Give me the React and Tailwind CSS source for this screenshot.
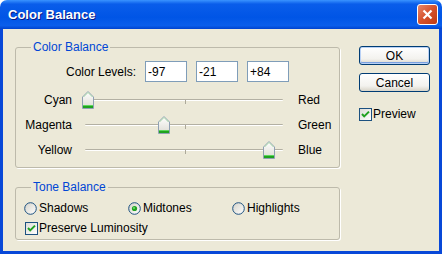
import React from 'react';

const Thumb = () => (
  <svg width="12" height="18" viewBox="0 0 12 18">
    <defs>
      <linearGradient id="thumbFill" x1="0" y1="0" x2="0" y2="1">
        <stop offset="0" stopColor="#FFFFFF" />
        <stop offset="1" stopColor="#DCDBD3" />
      </linearGradient>
    </defs>
    <path d="M0.5 6 L6 0.5 L11.5 6 V17.5 H0.5 Z" fill="url(#thumbFill)" stroke="#8FA0B3" />
    <path d="M1.5 6 L6 1.5 L10.5 6" fill="none" stroke="#A6D8A6" />
    <rect x="1" y="14" width="10" height="3" fill="#1FA31F" />
    <rect x="1" y="14" width="10" height="1" fill="#5CD65C" />
  </svg>
);

const Check = () => (
  <svg width="13" height="13" viewBox="0 0 13 13">
    <defs>
      <linearGradient id="boxFill" x1="0" y1="0" x2="1" y2="1">
        <stop offset="0" stopColor="#DCDCD7" />
        <stop offset="1" stopColor="#FFFFFF" />
      </linearGradient>
    </defs>
    <rect x="0.5" y="0.5" width="12" height="12" fill="url(#boxFill)" stroke="#1C5180" />
    <path d="M3 6 L5.2 8.4 L10 3.6" fill="none" stroke="#21A121" strokeWidth="2" />
  </svg>
);

const Radio = ({ on }) => (
  <svg width="13" height="13" viewBox="0 0 13 13">
    <defs>
      <linearGradient id="radioFill" x1="0" y1="0" x2="1" y2="1">
        <stop offset="0" stopColor="#D4D2C8" />
        <stop offset="1" stopColor="#FFFFFF" />
      </linearGradient>
    </defs>
    <circle cx="6.5" cy="6.5" r="5.8" fill="url(#radioFill)" stroke="#1C5180" />
    {on && <circle cx="6.5" cy="6.5" r="2.6" fill="#21A121" />}
    {on && <circle cx="6" cy="6" r="1" fill="#6FE06F" />}
  </svg>
);

function Slider({ left, right, value }) {
  const pos = ((value + 100) / 200) * 200;
  return (
    <div className="flex h-[25px] items-center">
      <span className="w-[56px] text-right">{left}</span>
      <div className="relative ml-[13px] h-[25px] w-[200px]">
        <div className="absolute left-0 top-[12px] h-[2px] w-[198px] rounded-full border-t border-[#B3B0A3] bg-white" />
        <div className="absolute left-[100px] top-[13px] h-[4px] w-px bg-[#ACA899]" />
        <div className="absolute top-[4px] leading-none" style={{ left: pos - 6 }}>
          <Thumb />
        </div>
      </div>
      <span className="ml-[13px]">{right}</span>
    </div>
  );
}

function Button({ children, main }) {
  return (
    <button
      className={
        'h-[19px] w-[71px] rounded-[3px] border border-[#003C74] bg-[linear-gradient(180deg,#FFFFFF_0%,#F3F2EE_70%,#D8D4C8_100%)] text-[12px] leading-none text-black ' +
        (main ? 'shadow-[inset_0_0_0_1px_#B9D1F5,inset_0_-1px_0_1px_#7AA0E0]' : '')
      }
    >
      {children}
    </button>
  );
}

export default function App() {
  const levels = ['-97', '-21', '+84'];
  return (
    <div className="flex h-[254px] w-[442px] flex-col overflow-hidden rounded-t-[7px] bg-white font-['Liberation_Sans',Arial,sans-serif] text-[12px] leading-[14px] text-black">
      <div className="flex h-[29px] items-center justify-between bg-[linear-gradient(180deg,#3A93FF_0%,#0A5DEA_14%,#0055E6_60%,#0A5EEB_88%,#0043CF_100%)] pl-[8px] pr-[4px]">
        <span className="text-[13px] font-bold text-white [text-shadow:1px_1px_0_#0A1883]">Color Balance</span>
        <div className="flex h-[21px] w-[21px] items-center justify-center rounded-[3px] border border-white bg-[linear-gradient(135deg,#E9876A_0%,#D5512C_50%,#C03A12_100%)]">
          <svg width="11" height="11" viewBox="0 0 11 11">
            <path d="M1.5 1.5 L9.5 9.5 M9.5 1.5 L1.5 9.5" stroke="white" strokeWidth="2.2" />
          </svg>
        </div>
      </div>

      <div className="flex flex-1 border-x-[3px] border-b-[3px] border-[#0848D8] bg-[#ECE9D8] pl-[12px] pt-[11px]">
        <div className="flex w-[325px] flex-col">
          <fieldset className="h-[128px] rounded-[3px] border border-[#BDBAAB] px-0 pt-[7px] shadow-[1px_1px_0_#FFFFFF]">
            <legend className="ml-[15px] px-[2px] text-[#0046D5]">Color Balance</legend>
            <div className="flex h-[21px] items-center gap-[9px]">
              <span className="w-[120px] text-right">Color Levels:</span>
              {levels.map(l => (
                <input
                  key={l}
                  readOnly
                  value={l}
                  className="h-[21px] w-[42px] border border-[#7F9DB9] bg-white pl-[2px] text-[12px] outline-none"
                />
              ))}
            </div>
            <div className="mt-[5px]">
              <Slider left="Cyan" right="Red" value={-97} />
              <Slider left="Magenta" right="Green" value={-21} />
              <Slider left="Yellow" right="Blue" value={84} />
            </div>
          </fieldset>

          <fieldset className="mt-[12px] h-[60px] rounded-[3px] border border-[#BDBAAB] pt-[4px] shadow-[1px_1px_0_#FFFFFF]">
            <legend className="ml-[15px] px-[2px] text-[#0046D5]">Tone Balance</legend>
            <div className="ml-[8px] grid h-[20px] grid-cols-[104px_104px_104px] items-center">
              <label className="flex items-center gap-[2px]"><Radio />Shadows</label>
              <label className="flex items-center gap-[2px]"><Radio on />Midtones</label>
              <label className="flex items-center gap-[2px]"><Radio />Highlights</label>
            </div>
            <label className="ml-[9px] flex h-[20px] items-center gap-[1px]"><Check />Preserve Luminosity</label>
          </fieldset>
        </div>

        <div className="ml-[19px] flex flex-col pt-[6px]">
          <Button main>OK</Button>
          <div className="mt-[8px]"><Button>Cancel</Button></div>
          <label className="mt-[15px] flex items-center gap-[1px]"><Check />Preview</label>
        </div>
      </div>
    </div>
  );
}
